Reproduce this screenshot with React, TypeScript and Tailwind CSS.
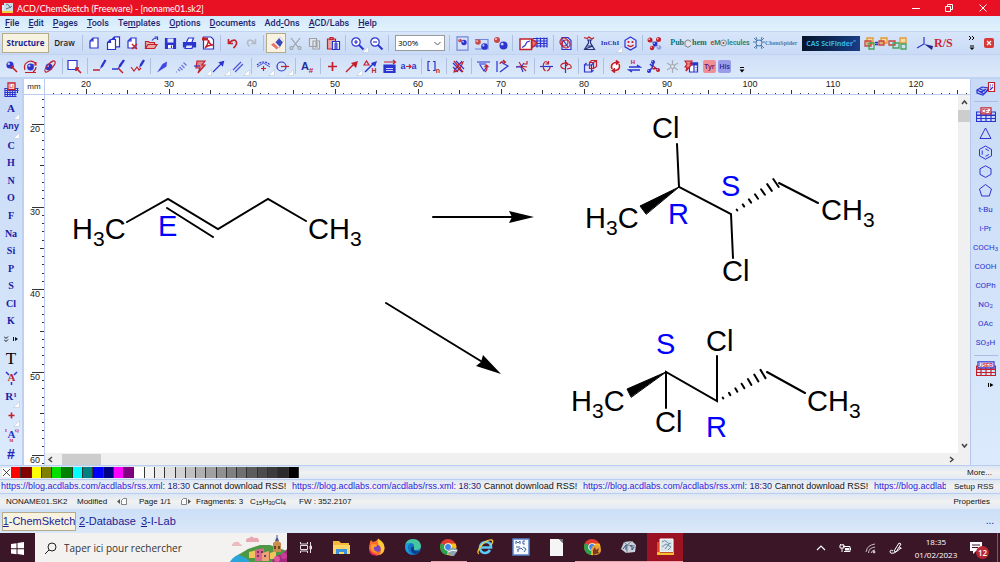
import type { ReactNode } from "react"

const B = "#2c34d0"
const R = "#c4202c"
const G = "#9aa0a8"

interface Tool {
    name: string,
    icon: ReactNode,
    more?: boolean,
    active?: boolean,
    width?: string,
}

function Icon({ children, w = 15, h = 15 }: { children: ReactNode, w?: number, h?: number }) {
    return <svg width={w} height={h} viewBox={`0 0 ${w} ${h}`} fill="none" stroke={B} strokeWidth={1.2} className="block shrink-0" aria-hidden="true">{children}</svg>
}

// a letter inside an icon
function Glyph({ x, y, size, color = B, serif, children }: { x: number, y: number, size: number, color?: string, serif?: boolean, children: string }) {
    return <text x={x} y={y} fontSize={size} fill={color} stroke="none" textAnchor="middle" className={serif ? "font-['Liberation_Serif',serif] font-bold" : "font-['Liberation_Sans',sans-serif] font-bold"}>{children}</text>
}

function Corner({ className }: { className: string }) {
    return <svg width="7" height="7" viewBox="0 0 7 7" className={`absolute ${className}`} aria-hidden="true"><path d="M6.500 .5v6h-6z" fill="#fff" stroke="#b9c6dd" strokeWidth=".6" /></svg>
}

function ToolButton({ tool }: { tool: Tool }) {
    return (
        <button type="button" aria-label={tool.name} className={`relative flex h-5 shrink-0 items-center justify-center ${tool.width || "w-[19px]"} ${tool.active ? "border border-[#b5ab8c] bg-[#f8f3e0]" : ""}`}>
            {tool.icon}
            {tool.more && <Corner className="right-[-2px] bottom-0" />}
        </button>
    )
}

function Divider({ width = "w-1.5" }: { width?: string }) {
    return <div className={`flex h-4 shrink-0 justify-center ${width}`}><div className="h-full w-px bg-[#aebfdf]" /></div>
}

function Group({ tools }: { tools: Tool[] }) {
    return <div className="flex shrink-0">{tools.map(t => <ToolButton key={t.name} tool={t} />)}</div>
}

const page = (x: number, y: number) => <path d={`M${x + 3} ${y}h5v10h-8v-7z M${x + 3} ${y}v3h-3`} fill="#fff" />
const ball = (x: number, y: number, r: number, c: string) => <g stroke="none"><circle cx={x} cy={y} r={r} fill={c} /><circle cx={x - r / 3} cy={y - r / 3} r={r / 3} fill="#fff" opacity=".75" /></g>

const fileTools: Tool[] = [
    { name: "New", icon: <Icon>{page(3, 2)}</Icon> },
    { name: "New page", icon: <Icon>{page(5.500, .8)}{page(1.500, 3.500)}</Icon> },
    { name: "Delete page", icon: <Icon>{page(3, 2)}<path d="M7 8l5 5M12 8l-5 5" stroke={R} strokeWidth="1.500" /></Icon> },
    { name: "Open", icon: <Icon><path d="M1.500 12.500v-7h3l1 1h5v2M1.500 12.500l2.500-4h9l-2.500 4z" stroke={R} fill="#e9a9a2" /><path d="M8 4.500q2-3 4.500-2M10.500 1h3v3" /></Icon> },
    { name: "Save", icon: <Icon><path d="M2.500 2.500h10v10h-10z" fill={B} /><path d="M4.500 2.500h6v4h-6z" fill="#dfe8fa" stroke="none" /><path d="M5 9h5v3.500h-5z" fill="#fff" stroke="none" /><path d="M8.500 9.500v2.500" /></Icon> },
    { name: "Print", icon: <Icon><path d="M4.500 6l2-4h5l-1.500 4" fill="#fff" /><path d="M1.500 6.500h12v4.500h-12z" fill={B} /><path d="M4 9h7l-1 3.500h-7z" fill="#dfe8fa" /></Icon> },
    { name: "Export to PDF", icon: <Icon><path d="M2.500 1h7.500l2.500 2.500v9.500h-10z" fill="#fff" /><path d="M1 1.500h6v3h-6z" fill={R} stroke="none" /><path d="M4 12q3.500-4 3.500-8 1 5 4.500 5-5 0-8 3z" stroke={R} strokeWidth="1.400" /></Icon> },
]

const undoTools: Tool[] = [
    { name: "Undo", icon: <Icon><path d="M3.500 3v4.500h4.500M4 7q4-4 6.500-2.500 3 3-2 7.500" stroke={R} strokeWidth="1.700" /></Icon> },
    { name: "Redo", icon: <Icon><path d="M11.500 3v4.500h-4.500M11 7q-4-4-6.500-2.500-2.500 2.500 1 6" stroke="#b4b9c2" strokeWidth="1.500" /></Icon> },
]

const editTools: Tool[] = [
    { name: "Erase", active: true, width: "w-[20px]", icon: <Icon><path d="M5 8l6-7 3.500 4-4 7z" fill="#3a48b8" stroke="none" /><path d="M2 9l4-3.500 4.500 5.500-3 2.500z" fill="#e8776c" stroke="none" /><path d="M5 6l5.500 5.500M10.500 1.500l3.500 4M2 10l4 3" stroke="#fff" /></Icon> },
    { name: "Cut", icon: <Icon><path d="M3 2l7 9M12 2l-7 9" stroke={G} /><circle cx="3.500" cy="12" r="1.500" stroke={G} /><circle cx="11.500" cy="12" r="1.500" stroke={G} /></Icon> },
    { name: "Copy", icon: <Icon><path d="M2.500 2.500h7v8h-7z M6 5h6.500v8h-6.500zM8 7h3M8 9h3M8 11h3" stroke={G} fill="#e4e7ec" /></Icon> },
    { name: "Paste", icon: <Icon><path d="M1.500 3h8v10h-8z" stroke={R} fill="#e8a7a2" /><path d="M4 1.500h3v2h-3z" stroke={R} /><path d="M6.500 5.500h7v8h-7z" fill="#fff" /><path d="M8 8h4M8 10h4M8 12h4M10 6v7" /></Icon> },
]

const zoomTools: Tool[] = [
    { name: "Zoom in", more: true, icon: <Icon><circle cx="6" cy="6" r="4.200" fill="#fff" /><path d="M9 9l4.500 4.500" strokeWidth="2" /><path d="M4 6h4M6 4v4" /></Icon> },
    { name: "Zoom out", icon: <Icon><circle cx="6" cy="6" r="4.200" fill="#fff" /><path d="M9 9l4.500 4.500" strokeWidth="2" /><path d="M4 6h4" /></Icon> },
]

const viewTools: Tool[] = [
    { name: "Full page", icon: <Icon><path d="M2 .8h11v13.400h-11z" fill="#d6e2fa" stroke="#7286dc" />{ball(5, 4.500, 1.800, "#c23b3b")}{ball(9, 6.500, 2.700, B)}</Icon> },
    { name: "Page width", icon: <Icon><path d="M1 3.500h13v9.500h-13" stroke="#7286dc" />{ball(4, 6, 2.800, "#c8484b")}{ball(10.500, 10.500, 3.300, B)}</Icon> },
    { name: "Show structure", icon: <Icon>{ball(4, 4, 3, "#c8484b")}{ball(10.500, 9.500, 4, B)}</Icon> },
]

const templateTools: Tool[] = [
    { name: "Template window", width: "w-[36px]", icon: <Icon w={29}><path d="M14 2.500h14M14 5h14M14 7.500h14M14 10h14M18 1.500v10M21.500 1.500v10M25 1.500v10M28 1.500v10" /><path d="M1 3h11.500v10.500h-11.500z" fill="#fff" stroke={R} strokeWidth="1.500" /><path d="M3 11.500l3-2 2-3.500 3-1" /><path d="M13 3l5 4-5 5z" fill="#d77" stroke={R} /></Icon> },
]

const searchTools: Tool[] = [
    { name: "Search structure", icon: <Icon><path d="M4 1.500h6l3 3v9h-9z" fill="#d8e3fa" /><circle cx="6" cy="6" r="4" stroke={R} /><circle cx="8" cy="8" r="4" stroke={R} /><path d="M5 4l5 7" /></Icon> },
]

const nameTools: Tool[] = [
    { name: "Generate name", icon: <Icon><path d="M2 1.500l3 1 2-1.500 3 2 2-1.500" stroke={R} /><path d="M5 4h5M6.500 4v3l-4 6.500h10l-4-6.500v-3M5 10h5M3 13l8-3" stroke="#27317b" /></Icon> },
    { name: "InChI", more: true, width: "w-[22px]", icon: <span className="font-['Liberation_Serif',serif] text-[7px] font-bold text-[#2c34b8]">InChI</span> },
    { name: "SMILES", icon: <Icon><path d="M7.500 1l5.500 3.300v6.500l-5.500 3.200-5.500-3.200v-6.500z" fill="#dfe6fb" /><circle cx="5.500" cy="6" r=".5" fill={R} stroke={R} /><circle cx="9.500" cy="6" r=".5" fill={R} stroke={R} /><path d="M4.500 9q3 3 6 0" stroke={R} /></Icon> },
]

const modelTools: Tool[] = [
    { name: "3D viewer", icon: <Icon><path d="M3 4l5 4M8 8l4-4M8 8l-1 4M8 8l4 4" stroke="#9fa8d8" strokeWidth="2" />{ball(3, 4, 2.500, R)}{ball(11.500, 3.500, 2.500, R)}{ball(8, 8, 2.400, B)}{ball(5, 12, 2.200, R)}{ball(12, 11.500, 2.300, "#8f9ce4")}</Icon> },
]

// second toolbar, one array per separated group
const drawGroups: Tool[][] = [
    [
        { name: "Select and move", icon: <Icon>{ball(6, 6, 3.600, B)}<path d="M7 7l6 6M7.500 10v-2.500h2.500" stroke={R} strokeWidth="1.600" /></Icon> },
        { name: "Select and rotate", icon: <Icon>{ball(7.500, 8, 3.400, B)}<path d="M2 11q-2-6 3.500-8.500 5-1.500 7.500 3M13 3v3h-3M2 13.500h11M13 8q0 3-3 5" stroke={R} /></Icon> },
        { name: "3D rotation", icon: <Icon>{ball(7, 8, 3.500, B)}<ellipse cx="8" cy="7.500" rx="2.500" ry="7" transform="rotate(42 8 7.500)" stroke={R} /></Icon> },
    ],
    [{ name: "Lasso", icon: <Icon><path d="M1 1.500h9v9h-9z" fill="#fff" /><path d="M9 9l5 5M9 12v-3h3" stroke={R} strokeWidth="1.700" /></Icon> }],
    [
        { name: "Draw normal", icon: <Icon><path d="M1 11h7" stroke={R} strokeWidth="1.500" /><path d="M8 10l1-3.500 3.500-6 2 1-3.500 6z" fill={B} stroke="none" /></Icon> },
        { name: "Draw continuous", icon: <Icon><path d="M7 9l5 5" stroke={R} strokeWidth="1.500" /><path d="M1 10h6" strokeWidth="1.500" /><path d="M7 10l1-4 4-5.500 2 1-4 6z" fill={B} stroke="none" /></Icon> },
        { name: "Draw chains", icon: <Icon><path d="M1 8l3 4 3-4 2 3 2-2" stroke={R} /><path d="M9 9l1-4 3-4.500 2 1-3 5z" fill={B} stroke="none" /></Icon> },
    ],
    [
        { name: "Up stereo bond", icon: <Icon><path d="M2 13.500l5.500-8.500 4.500-2.500-.5 5z" fill="#3f4be0" stroke="none" /></Icon> },
        { name: "Down stereo bond", icon: <Icon><path d="M2 13l1 0M4 10l2 2M5.500 8l3 3M7.500 6l3 3M9.500 3.500l3 3" stroke="#6d74dc" /></Icon> },
        { name: "Undefined bond", more: true, icon: <Icon><path d="M4 2h8l-3 4h3l-7 8 2-5h-4z" fill="#de8587" stroke={R} /><path d="M1 7h6" /></Icon> },
        { name: "Coordinating bond", more: true, icon: <Icon><path d="M1 13l9-9M7.500 3.500l4-1-1 4z" fill={B} /></Icon> },
        { name: "Multiple bond", more: true, icon: <Icon><path d="M2 11l8-8M4 13l8-8" stroke="#4a55dc" /></Icon> },
    ],
    [
        { name: "Delocalized curve", more: true, icon: <Icon><path d="M1 6q6.500-6 13 0" strokeDasharray="2 1" /><path d="M1 8l6.500-4 6.500 4" strokeWidth=".8" /><path d="M5 9.500h5M7.500 7v5" stroke={R} /></Icon> },
        { name: "Markush bond", more: true, icon: <Icon><circle cx="6.500" cy="7.500" r="4.500" /><path d="M6 7.500h8" stroke={R} /></Icon> },
    ],
    [{ name: "Auto renumbering", icon: <Icon><Glyph x={5} y={11} size={11} color="#22309c">A</Glyph><Glyph x={11} y={14} size={8} color={R}>#</Glyph></Icon> }],
    [
        { name: "Reaction plus", icon: <Icon><path d="M3 7.500h9M7.500 3v9" stroke={R} strokeWidth="1.700" /></Icon> },
        { name: "Reaction arrow", more: true, icon: <Icon><path d="M2 13l8-8" stroke={R} strokeWidth="1.500" /><path d="M7 4l7-2-2 7z" fill={R} stroke="none" /></Icon> },
        { name: "Reaction conditions", icon: <Icon><path d="M2 13l9-9" strokeWidth="1.500" /><path d="M8 4l6-2-2 6z" fill={B} stroke="none" /><path d="M1 6l2.500-4 2.500 4z" stroke={R} /><Glyph x={11} y={14} size={7} color={R}>H</Glyph></Icon> },
        { name: "Arrow labels", icon: <Icon><path d="M2 3h11M11 1l2.500 2-2.500 2" stroke={R} /><path d="M2 6h11v7.500h-11z" fill={B} /><path d="M4 9.500h7M4 11.500h7" stroke="#fff" strokeWidth=".8" /></Icon> },
        { name: "Map atoms", icon: <Icon w={17}><Glyph x={3} y={10} size={9}>a</Glyph><Glyph x={14} y={10} size={9}>a</Glyph><path d="M6 7.500h5M9 5.500l2 2-2 2" stroke={R} /></Icon> },
    ],
    [{ name: "Polymer brackets", icon: <Icon><path d="M4 2.500h-2v9h2M7 2.500h2v9h-2" /><Glyph x={12} y={14} size={7} color={R}>n</Glyph></Icon> }],
    [{ name: "Clean structure", icon: <Icon><path d="M2 4l9 9M5 2l8 8M2 8l5 5M11 2l-8 10" /><path d="M3 2l9 11M12 3q-6 2-9 10 6-1 9-10z" stroke={R} /></Icon> }],
    [
        { name: "Set bond horizontally", icon: <Icon><path d="M1 3h13M3 5h7M4 6l4 6 3-5" /><path d="M9 13q3-3 1.500-6M8.500 8l2-2 2 2" stroke={R} /></Icon> },
        { name: "Set bond vertically", icon: <Icon><path d="M2 2v11M5 13l8-6-7-4" /><path d="M5 5q0-3 5-2M8 1l2.500 2L8 5" stroke={R} /></Icon> },
        { name: "Flip on bond", icon: <Icon><path d="M2 8l5-1 6 1M5 3l3 5 4 4" stroke={R} /><path d="M10 4l-3 4 2 5M2 8h6" /><path d="M10 5h3v-3" stroke={R} /></Icon> },
    ],
    [
        { name: "Flip top to bottom", icon: <Icon><path d="M1 7.500h13" /><path d="M9.500 5q-3-5-5 0-1 5 2 7M9.500 2v3h-3M8 12q3-1 3-4" stroke={R} /></Icon> },
        { name: "Flip left to right", icon: <Icon><path d="M7.500 1v13" /><path d="M10 5q-5-2-7 1-1 3 4 4M10 5q4 1 3 4l-4 1M8 3l2 2-2 2" stroke={R} /></Icon> },
    ],
    [{ name: "3D optimization", icon: <Icon><path d="M1.500 6h7v7h-7zM1.500 6l2-2M8.500 6l2-2M8.500 13l2-2" fill="#dbe4fb" /><path d="M6.500 3.500h4v6h-4zM6.500 3.500l2-2h5v6l-3 2M10.500 3.500l3-2" stroke={R} /></Icon> }],
    [
        { name: "Tautomers", icon: <Icon><circle cx="7.500" cy="7.500" r="6" stroke="#d6dbe6" fill="#fff" /><path d="M4 10q-2-5 3-6.500h3M8 1.500l2.500 2-2.500 2M11 5q2 5-3 6.500h-3M7 9.500l-2.500 2 2.500 2" stroke={R} strokeWidth="1.700" /></Icon> },
        { name: "Hydrogen shift", icon: <Icon><Glyph x={6} y={5} size={6} color={R}>H</Glyph><path d="M2 8h11l-3-2M13 11h-11l3 2" strokeWidth="1.500" /></Icon> },
        { name: "Check structure", icon: <Icon><path d="M7 2v6l-5 5M7 8l6 3M4 5l3 3" strokeWidth="1.700" />{ball(7, 3, 2, B)}{ball(3, 12, 2, B)}{ball(12, 11, 2, R)}{ball(8, 9, 1.700, R)}</Icon> },
        { name: "Calculated properties", icon: <Icon><path d="M7.500 1v13M2 4l11 7M2 11l11-7" stroke="#a8adb5" /><circle cx="7.500" cy="7.500" r="2" stroke="#a8adb5" fill="#dfe4ec" /></Icon> },
        { name: "Periodic data", icon: <Icon><path d="M5.500 4h8v9h-8z" fill="#fff" /><path d="M5.500 4h8v2h-8z" fill={B} /><path d="M10 6v7M11.500 8.500h1M11.500 11h1" /><path d="M1 2h7l-2 3h2l-6 7 1-4h-2l2-3z" fill="#e88" stroke={R} /></Icon> },
    ],
]

function TopToolbar() {
    return (
        <div className="flex h-6 items-center border-y border-[#c2d3f1] bg-linear-to-b from-[#d8e6fa] to-[#c9dbf6] pl-0.5">
            <button type="button" className="h-5 w-[47px] shrink-0 border border-[#b5ab8c] bg-[#f8f3e0] font-['Open_Sans',sans-serif] text-[8px] font-bold text-[#1d1d96]">Structure</button>
            <button type="button" className="h-5 w-[31px] shrink-0 font-['Open_Sans',sans-serif] text-[8px] font-semibold text-[#222]">Draw</button>
            <Divider width="w-[5px]" />
            <Group tools={fileTools} />
            <Divider width="w-[5px]" />
            <Group tools={undoTools} />
            <Divider width="w-[5px]" />
            <Group tools={editTools} />
            <Divider width="w-[5px]" />
            <Group tools={zoomTools} />
            <Divider width="w-[5px]" />
            <div className="relative ml-1 shrink-0">
                <select aria-label="Zoom level" defaultValue="300%" className="block h-4 w-[50px] appearance-none border border-[#9a9a9a] bg-white py-0 pl-0.5 font-['Open_Sans',sans-serif] text-[8px] leading-[14px] text-black">
                    <option>300%</option>
                    <option>200%</option>
                    <option>100%</option>
                </select>
                <svg width="7" height="5" viewBox="0 0 7 5" className="pointer-events-none absolute top-1.5 right-1" aria-hidden="true"><path d="M.5 1l3 3 3-3" fill="none" stroke="#555" /></svg>
            </div>
            <Divider width="w-2" />
            <Group tools={viewTools} />
            <Divider width="w-[5px]" />
            <Group tools={templateTools} />
            <Divider width="w-[5px]" />
            <Group tools={searchTools} />
            <Divider width="w-[5px]" />
            <Group tools={nameTools} />
            <Divider width="w-[5px]" />
            <Group tools={modelTools} />
            <button type="button" className="ml-1.5 flex w-[37px] shrink-0 items-center justify-center font-['Liberation_Serif',serif] text-[8px] leading-none font-bold text-[#0d7371]">
                Pub<svg width="8" height="9" viewBox="0 0 8 9" className="shrink-0" aria-label="C"><path d="M7 6.500l-3 1.900-3-1.800v-4l3-1.800 3 1.900" fill="#e3e6ea" stroke="#777e88" /></svg>hem
            </button>
            <button type="button" className="ml-1 flex w-[38px] shrink-0 items-center justify-center font-['Roboto',sans-serif] text-[7px] leading-none font-semibold text-[#1e8270]">
                <span className="text-[#c0303c]">e</span>M<svg width="7" height="8" viewBox="0 0 7 8" className="shrink-0" aria-label="o"><circle cx="3.500" cy="4" r="3" fill="#d9e8e8" stroke="#868d95" /><circle cx="3.500" cy="4" r="1" fill="#c0303c" /></svg>lecules
            </button>
            <button type="button" className="ml-1 flex w-[45px] shrink-0 items-center font-['Liberation_Serif',serif] text-[6px] leading-none font-bold text-[#4f7ba8]">
                <svg width="12" height="12" viewBox="0 0 12 12" className="shrink-0" fill="none" stroke="#4f7ba8" aria-hidden="true"><circle cx="6" cy="6" r="3" /><path d="M1 1l3 3M11 1l-3 3M1 11l3-3M11 11l-3-3M0 5h3M12 5h-3M3 0l1 3M9 0l-1 3M3 12l1-3M9 12l-1-3" /></svg>
                ChemSpider
            </button>
            <button type="button" className="ml-1 flex h-[15px] w-[58px] shrink-0 items-center justify-center bg-linear-to-r from-[#06142c] to-[#1a3d88] font-['Open_Sans',sans-serif] text-[7px] leading-none font-bold whitespace-nowrap text-[#35b4e4]">CAS SciFinder<sup className="text-[4px]">n</sup></button>
            <button type="button" aria-label="Retrosynthesis" className="ml-1 shrink-0">
                <svg width="44" height="13" viewBox="0 0 44 13" fill="none" strokeWidth="1.300" aria-hidden="true">
                    <path d="M3 1h6v6h-6zM17 1h6v5h-6zM36 1h6v5h-6z" stroke="#e39a2e" fill="#f6dba8" />
                    <path d="M1 4h6v5h-6zM15 4h5v4h-5zM25 4h6v4h-6z" stroke="#c9423c" />
                    <path d="M5 6h5v6h-5zM29 6h6v5h-6zM37 7h5v5h-5z" stroke="#47a35b" />
                    <path d="M11 5.500h3M11 7.500h3" stroke={B} />
                </svg>
            </button>
            <button type="button" className="ml-2 flex shrink-0 items-center font-['Liberation_Serif',serif] text-[12px] leading-none font-bold text-[#cb1f37]">
                <svg width="18" height="14" viewBox="0 0 18 14" aria-hidden="true"><path d="M8 1v7L1 12" fill="none" stroke={B} strokeWidth="1.200" /><path d="M8 8l9 2-1 4z" fill="#24278f" /></svg>
                R/S
            </button>
            <button type="button" aria-label="Toolbar options" className="ml-auto shrink-0">
                <svg width="8" height="16" viewBox="0 0 8 16" fill="none" stroke="#000" aria-hidden="true"><path d="M1 1l2 2-2 2M4 1l2 2-2 2M2 11h4" /><path d="M1.500 12.500h5l-2.500 2.500z" fill="#000" stroke="none" /></svg>
            </button>
            <button type="button" aria-label="Close document" className="mr-1.5 ml-2 flex size-2.5 shrink-0 items-center justify-center rounded-xs bg-[#d73838]">
                <svg width="6" height="6" viewBox="0 0 6 6" aria-hidden="true"><path d="M1 1l4 4M5 1l-4 4" stroke="#fff" strokeWidth="1.200" /></svg>
            </button>
        </div>
    )
}

function DrawToolbar() {
    return (
        <div className="flex h-6 items-center border-b-2 border-[#bfd3f3] bg-linear-to-b from-[#cfdff7] to-[#dbe9fa] pl-0.5">
            {drawGroups.map((g, i) => (
                <div key={i} className="flex shrink-0 items-center">
                    {i > 0 && <Divider />}
                    <Group tools={g} />
                </div>
            ))}
            <button type="button" className="ml-0.5 flex shrink-0 items-center font-['Open_Sans',sans-serif] text-[7px] leading-none font-semibold text-[#4a1a7a]">
                <span className="flex h-[13px] w-[13px] items-center justify-center rounded-xs bg-[#f28e96]">Tyr</span>
                <span className="ml-0.5 flex h-[13px] w-[13px] items-center justify-center rounded-xs bg-[#9a9ce8] text-[#1d1d9c]">His</span>
            </button>
            <button type="button" aria-label="More tools" className="mt-2 ml-2 shrink-0">
                <svg width="6" height="6" viewBox="0 0 6 6" aria-hidden="true"><path d="M1 0h4v1h-4zM.5 2.500h5l-2.500 3z" /></svg>
            </button>
        </div>
    )
}

const elements = ["C", "H", "N", "O", "F", "Na", "Si", "P", "S", "Cl", "K"]
const sideSerif = "font-['Liberation_Serif',serif] font-bold text-[#1c1ca8]"

function SideItem({ name, more, children }: { name: string, more?: boolean, children: ReactNode }) {
    return (
        <button type="button" aria-label={name} className="relative flex h-[19px] w-full shrink-0 items-center justify-center leading-none">
            {children}
            {more && <Corner className="right-0.5 bottom-[-2px]" />}
        </button>
    )
}

function AtomsBar() {
    return (
        <aside className="flex w-6 shrink-0 flex-col border-r-2 border-[#bfd0f0] bg-linear-to-b from-[#c8daf6] to-[#dbeafc] pt-px">
            <SideItem name="Periodic table"><Icon><path d="M.5 6.500h14M.5 8.500h14M.5 10.500h12M.5 12.500h12M.5 14.500h12M1 6v8.500M3.500 6v8.500M6 6v8.500M8.500 6v8.500M11 6v8.500M13.500 6v5" strokeWidth="1" /><path d="M4 1h7v6.500h-7z" fill="#fff" stroke={R} strokeWidth="1.300" /><Glyph x={7.500} y={6} size={5} color={R}>Li</Glyph></Icon></SideItem>
            <SideItem name="Atom A" more><span className="font-['Liberation_Serif',serif] text-[11px] font-bold text-[#1c1ca8]">A</span></SideItem>
            <SideItem name="Any atom" more><span className="font-['Liberation_Mono',monospace] text-[9px] font-bold text-[#1c1ca8]">Any</span></SideItem>
            <div className="flex h-[193px] shrink-0 flex-col">
                {elements.map(e => <button key={e} type="button" className={`flex-1 text-[10px] leading-none ${sideSerif}`}>{e}</button>)}
            </div>
            <SideItem name="More elements"><svg width="14" height="7" viewBox="0 0 14 7" fill="none" stroke="#111" aria-hidden="true"><path d="M0 .5l2 2 2-2M0 3.500l2 2 2-2M9.500 1v4" /><path d="M11 1l3 2-3 2z" fill="#111" stroke="none" /></svg></SideItem>
            <SideItem name="Text"><span className="font-['Liberation_Serif',serif] text-[17px] text-black">T</span></SideItem>
            <SideItem name="Atom properties"><Icon><path d="M2 2l3 3M13 2l-3 3M7.500 12v3" strokeWidth="1.500" /><Glyph x={7.500} y={11} size={11} color={R} serif>A</Glyph></Icon></SideItem>
            <SideItem name="Radical label" more><span className={`text-[11px] ${sideSerif}`}>R<sup className="text-[7px]">1</sup></span></SideItem>
            <SideItem name="Charge" more><Icon><path d="M4.500 7.500h6M7.500 4.500v6" stroke={R} strokeWidth="1.600" /></Icon></SideItem>
            <SideItem name="Query atom"><Icon><Glyph x={7.500} y={11} size={11} serif>A</Glyph><Glyph x={2} y={5} size={5} color={R} serif>I</Glyph><Glyph x={13} y={5} size={5} color={R} serif>Q</Glyph><Glyph x={7.500} y={15} size={4} color={R} serif>M</Glyph></Icon></SideItem>
            <SideItem name="Numbering"><span className="font-['Liberation_Sans',sans-serif] text-[14px] font-bold text-[#2424b8]">#</span></SideItem>
        </aside>
    )
}

const rings = [
    { name: "Cyclopropane", d: "M7.500 2l5.500 10.500h-11z" },
    { name: "Benzene", d: "M7.500 1l6 3.400v6.400l-6 3.400-6-3.400v-6.400zM7.500 3.800l3.300 1.900M10.800 9.500l-3.300 1.900M4.200 5.500v4.200" },
    { name: "Cyclohexane", d: "M7.500 1.800l5.500 3v5.600l-5.500 3-5.500-3v-5.600z" },
    { name: "Cyclopentane", d: "M7.500 1.500l6 4.500-2.200 7h-7.600l-2.200-7z" },
]

const radicals: ReactNode[] = [
    "t-Bu", "i-Pr", <>COCH<sub className="text-[6px]">3</sub></>, "COOH", "COPh", <>NO<sub className="text-[6px]">2</sub></>, "OAc", <>SO<sub className="text-[6px]">3</sub>H</>,
]

function RadicalsBar() {
    return (
        <aside className="flex w-[30px] shrink-0 flex-col items-center border-l border-[#b5c6ec] bg-linear-to-b from-[#c8daf6] to-[#dbeafc]">
            <SideItem name="Template table"><Icon w={20}><path d="M1 9l5-3 7 1-5 6zM1 9v3l6 2 6-6M4 8l5 2M5 11l5-3M3 10l4 1" fill="#b9c5f5" /><path d="M12.500 1.500h6v9h-6z" fill="#fff" stroke={R} /><path d="M14 9l3-3M14 4h1M16 4h1M14 6h1" /></Icon></SideItem>
            <div className="my-[3px] h-px w-6 shrink-0 bg-[#a9bce6]" />
            <SideItem name="Table of radicals"><Icon w={20}><path d="M.5 5h19v3h-19zM.5 8.500h19v3h-19zM.5 11.500h19v3h-19zM5 5v9.500M10 5v9.500M15 5v9.500" /><path d="M5 .8h10v6h-10z" fill="#fff" stroke={R} /><Glyph x={10} y={6} size={5} color={R}>CF₃</Glyph></Icon></SideItem>
            {rings.map(r => <SideItem key={r.name} name={r.name}><Icon><path d={r.d} strokeWidth="1" /></Icon></SideItem>)}
            {radicals.map((r, i) => (
                <button key={i} type="button" className="h-[19px] w-full shrink-0 font-['Roboto',sans-serif] text-[8px] leading-none whitespace-nowrap text-[#2c34d0]">{r}</button>
            ))}
            <div className="my-[3px] h-px w-6 shrink-0 bg-[#a9bce6]" />
            <SideItem name="User templates"><Icon w={20}><path d="M.5 5h19v3h-19zM.5 8.500h19v3h-19zM.5 11.500h19v3h-19zM5 5v9.500M10 5v9.500M15 5v9.500" stroke={R} /><path d="M2 .8h16v6h-16z" fill="#fff" /><Glyph x={10} y={6} size={5} color={R}>USER</Glyph></Icon></SideItem>
            <button type="button" aria-label="More templates" className="mt-1 ml-2.5 shrink-0"><svg width="6" height="6" viewBox="0 0 6 6" aria-hidden="true"><path d="M0 1h1v4h-1zM2 1l3.500 2-3.500 2z" /></svg></button>
        </aside>
    )
}

const STEP = 8.300

function TopRuler() {
    const ticks = Array.from({ length: 111 }, (_, i) => i)
    return (
        <svg className="block h-4 w-full font-['Liberation_Sans',sans-serif] text-[9px]" aria-label="Horizontal ruler in millimetres">
            {ticks.map(i => {
                const x = Math.round(7.500 + i * STEP)
                const mm = i + 16
                const len = mm % 10 === 0 ? 5 : mm % 5 === 0 ? 4 : 1
                return <g key={i}>
                    <path d={`M${x + .5} ${15 - len}v${len}`} stroke="#333" />
                    {mm % 10 === 0 && <text x={x} y="8" textAnchor="middle" fill="#222">{mm}</text>}
                </g>
            })}
        </svg>
    )
}

function LeftRuler() {
    const ticks = Array.from({ length: 90 }, (_, i) => i)
    return (
        <svg className="block w-full flex-1 font-['Liberation_Sans',sans-serif] text-[9px]" height="0" aria-label="Vertical ruler in millimetres">
            {ticks.map(i => {
                const y = Math.round(4 + i * 8.270)
                const mm = i + 17
                const len = mm % 10 === 0 ? 12 : mm % 5 === 0 ? 4 : 2
                return <g key={i}>
                    <path d={`M${20 - len} ${y + .5}h${len}`} stroke="#333" />
                    {mm % 10 === 0 && <text x="16" y={y + 8} textAnchor="end" fill="#222">{mm}</text>}
                </g>
            })}
        </svg>
    )
}

function Methyl({ x, y, flip }: { x: number, y: number, flip?: boolean }) {
    return flip
        ? <text x={x} y={y}>H<tspan dy="7" fontSize="21">3</tspan><tspan dy="-7">C</tspan></text>
        : <text x={x} y={y}>CH<tspan dy="7" fontSize="21">3</tspan></text>
}

// dashed wedge: strokes grow wider from the stereo centre outwards
function Hash({ x, y, dx, dy }: { x: number, y: number, dx: number, dy: number }) {
    const len = Math.hypot(dx, dy)
    return <>
        {[0, 1, 2, 3, 4, 5, 6].map(i => {
            const t = i / 6
            const half = .6 + i * .7
            const nx = -dy / len * half
            const ny = dx / len * half
            return <line key={i} x1={x + dx * t - nx} y1={y + dy * t - ny} x2={x + dx * t + nx} y2={y + dy * t + ny} />
        })}
    </>
}

function Canvas() {
    return (
        <svg className="block w-full flex-1 bg-white font-['Liberation_Sans',sans-serif]" height="0" aria-label="Addition of chlorine to pent-2-ene">
            <g transform="translate(-45 -95)" stroke="#000" strokeWidth="2" strokeLinecap="round" fill="none">
                <path d="M127 222L168 199L218 229L268 199L306 221M167 208L213 237" />
                <path d="M433 217H512M386 303L484 363" />
                <path d="M534 217L509 211L512 217L509 223Z" fill="#000" stroke="none" />
                <path d="M501 374L476 366L481 362L483 355Z" fill="#000" stroke="none" />

                <path d="M677 144L679 187L731 214L733 258M779 183L818 203" />
                <path d="M679 187L640 206L646 214Z" fill="#000" strokeWidth="1" />
                <Hash x={737} y={210} dx={39} dy={-27} />

                <path d="M666 408V372L717 401V356M767 372L805 393" />
                <path d="M666 372L627 389L631 397Z" fill="#000" strokeWidth="1" />
                <Hash x={723} y={398} dx={40} dy={-24} />
            </g>
            <g transform="translate(-45 -95)" fontSize="29" fill="#000">
                <Methyl x={72} y={239} flip />
                <Methyl x={308} y={239} />
                <Methyl x={585} y={228} flip />
                <Methyl x={821} y={220} />
                <Methyl x={571} y={411} flip />
                <Methyl x={807} y={411} />
                <text x="652" y="138">Cl</text>
                <text x="722" y="281">Cl</text>
                <text x="706" y="351">Cl</text>
                <text x="655" y="432">Cl</text>
            </g>
            <g transform="translate(-45 -95)" fontSize="29" fill="#00f">
                <text x="158" y="236">E</text>
                <text x="668" y="224">R</text>
                <text x="721" y="196">S</text>
                <text x="656" y="354">S</text>
                <text x="706" y="437">R</text>
            </g>
        </svg>
    )
}

function Chevron({ d }: { d: string }) {
    return <svg width="7" height="7" viewBox="0 0 7 7" aria-hidden="true"><path d={d} fill="none" stroke="#444" strokeWidth="1.500" /></svg>
}

function Workspace() {
    return (
        <main className="flex min-h-[386px] flex-1">
            <AtomsBar />
            <div className="flex w-[21px] shrink-0 flex-col border-r border-[#b9cbef] bg-white">
                <div className="flex h-4 items-center justify-center border-b border-[#b9cbef] font-['Liberation_Sans',sans-serif] text-[8px] text-[#222]">mm</div>
                <LeftRuler />
            </div>
            <div className="flex min-w-0 flex-1 flex-col">
                <div className="h-4 shrink-0 border-b border-[#b9cbef] bg-white"><TopRuler /></div>
                <div className="flex flex-1">
                    <div className="flex min-w-0 flex-1 flex-col"><Canvas /></div>
                    <div className="flex w-3 shrink-0 flex-col items-center bg-[#f0f0f0]">
                        <button type="button" aria-label="Scroll up" className="flex h-[15px] items-center"><Chevron d="M1 5l2.500-3 2.500 3" /></button>
                        <div className="h-3 w-full bg-[#cdcdcd]" />
                        <button type="button" aria-label="Scroll down" className="mt-auto flex h-[15px] items-center"><Chevron d="M1 2l2.500 3 2.500-3" /></button>
                    </div>
                </div>
                <div className="flex h-3 shrink-0 items-center bg-[#f0f0f0] pr-[15px]">
                    <button type="button" aria-label="Scroll left" className="flex w-[17px] pl-0.5"><Chevron d="M5 1l-3 2.500 3 2.500" /></button>
                    <div className="h-[11px] w-[39px] bg-[#cdcdcd]" />
                    <button type="button" aria-label="Scroll right" className="ml-auto"><Chevron d="M2 1l3 2.500-3 2.500" /></button>
                </div>
            </div>
            <RadicalsBar />
        </main>
    )
}

const swatches = [
    "bg-[#ff0000]", "bg-[#800000]", "bg-[#ffff00]", "bg-[#808000]", "bg-[#00e000]", "bg-[#008000]", "bg-[#00ffff]",
    "bg-[#008080]", "bg-[#0000ff]", "bg-[#000080]", "bg-[#ff00ff]", "bg-[#800080]", "bg-[#ffffff]", "bg-[#f4f4f4]",
    "bg-[#ebebeb]", "bg-[#e0e0e0]", "bg-[#d2d2d2]", "bg-[#c0c0c0]", "bg-[#b0b0b0]", "bg-[#a0a0a0]", "bg-[#909090]",
    "bg-[#808080]", "bg-[#707070]", "bg-[#5c5c5c]", "bg-[#4c4c4c]", "bg-[#3c3c3c]", "bg-[#2c2c2c]", "bg-[#000000]",
]

const barStyle = "flex shrink-0 items-center border-t border-[#b9cdf0] bg-linear-to-b from-[#dce6f4] via-[#f1f1f0] to-[#e2eaf5]"

function Palette() {
    return (
        <div className={`h-3.5 ${barStyle}`}>
            <button type="button" aria-label="No colour" className="ml-0.5 w-[9px]"><svg width="9" height="9" viewBox="0 0 9 9" aria-hidden="true"><path d="M0 0h9v9h-9z" fill="#fff" /><path d="M1 1l7 7M8 1l-7 7" stroke="#222" strokeWidth=".8" /></svg></button>
            <div className="flex h-[11px] w-[288px]">
                {swatches.map(s => <button key={s} type="button" aria-label="Colour" className={`flex-1 border-r border-[#333] ${s}`} />)}
            </div>
            <button type="button" className="mr-2 ml-auto font-['Liberation_Sans',sans-serif] text-[8px] leading-none text-[#111]">More...</button>
        </div>
    )
}

function RssBar() {
    return (
        <div className={`h-3.5 ${barStyle} font-['Liberation_Sans',sans-serif] leading-none whitespace-nowrap`}>
            <div className="flex min-w-0 flex-1 overflow-hidden text-[9px]">
                {[0, 1, 2, 3].map(i => (
                    <div key={i} className="w-[291px] shrink-0 pl-px">
                        <a href="https://blog.acdlabs.com/acdlabs/rss.xml" className="text-[#2a22e0]">https://blog.acdlabs.com/acdlabs/rss.xml:</a> <span className="text-[#1c1a80]">18:30</span> <span className="text-[#111]">Cannot download RSS!</span>
                    </div>
                ))}
            </div>
            <button type="button" className="w-[54px] shrink-0 pl-2 text-left text-[8px] text-[#111]">Setup RSS</button>
        </div>
    )
}

function StatusBar() {
    return (
        <div className={`h-4 ${barStyle} font-['Liberation_Sans',sans-serif] text-[8px] leading-none whitespace-nowrap text-[#111]`}>
            <span className="w-[71px] pl-1.5">NONAME01.SK2</span>
            <span className="w-[46px] pl-1.5">Modified</span>
            <button type="button" aria-label="Previous page"><svg width="11" height="7" viewBox="0 0 11 7" aria-hidden="true"><path d="M3 1v5l-3-2.500z" fill="#555" /><path d="M6.500 .5h3v6h-5v-4z" fill="#fff" stroke="#666" strokeWidth=".8" /></svg></button>
            <span className="w-[52px] pl-[11px]">Page 1/1</span>
            <button type="button" aria-label="Next page"><svg width="11" height="7" viewBox="0 0 11 7" aria-hidden="true"><path d="M8 1v5l3-2.500z" fill="#555" /><path d="M3.500 .5h3v6h-5v-4z" fill="#fff" stroke="#666" strokeWidth=".8" /></svg></button>
            <span className="w-[59px] pl-[5px]">Fragments: 3</span>
            <span className="w-[49px]">C<sub className="text-[6px]">15</sub>H<sub className="text-[6px]">30</sub>Cl<sub className="text-[6px]">4</sub></span>
            <span>FW : 352.2107</span>
            <button type="button" className="mr-2.5 ml-auto">Properties</button>
        </div>
    )
}

function ModuleTabs() {
    return (
        <nav className="flex h-6 shrink-0 items-center bg-linear-to-b from-[#cbdff7] to-[#dbe8f9] pl-0.5 font-['Liberation_Sans',sans-serif] text-[11px] leading-none whitespace-nowrap text-[#1d1d96]">
            <button type="button" className="flex h-[19px] w-[74px] items-center justify-center border border-[#b5ab8c] bg-[#f8f3e0]"><span><u>1</u>-ChemSketch</span></button>
            <button type="button" className="ml-[3px]"><u>2</u>-Database</button>
            <button type="button" className="ml-[5px]"><u>3</u>-I-Lab</button>
            <button type="button" className="mr-1.5 ml-auto text-[10px]">...</button>
        </nav>
    )
}

function Chrome({ children }: { children?: ReactNode }) {
    return (
        <svg width="20" height="19" viewBox="0 0 20 19" aria-hidden="true">
            <circle cx="9" cy="9" r="8" fill="#e33b2e" />
            <path d="M9 9L2.100 5A8 8 0 0 0 8 17z" fill="#2ba24c" />
            <path d="M9 9l-1 8a8 8 0 0 0 8.500-11.500H9z" fill="#fbc116" />
            <circle cx="9" cy="9" r="3.800" fill="#fff" />
            <circle cx="9" cy="9" r="2.900" fill="#3f82ee" />
            {children}
        </svg>
    )
}

const apps: { name: string, icon: ReactNode, state?: string }[] = [
    { name: "Task view", icon: <svg width="13" height="13" viewBox="0 0 13 13" fill="none" stroke="#e4dce0" aria-hidden="true"><path d="M1.500 1v2h7v-2M1.500 12v-2h7v2M1.500 4.500h7v4h-7zM11.500 1v11" /><path d="M11 5h1.500v3h-1.500z" fill="#e4dce0" /></svg> },
    { name: "File explorer", icon: <svg width="17" height="15" viewBox="0 0 17 15" aria-hidden="true"><path d="M0 1h6l2 2h8v11h-16z" fill="#f5b83a" /><path d="M0 5h17v9h-17z" fill="#fbd667" /><path d="M3 14v-5h11v5h-3v-2h-5v2z" fill="#3b93dd" /></svg> },
    { name: "Firefox", icon: <svg width="18" height="18" viewBox="0 0 18 18" aria-hidden="true"><path d="M2 4l1-2 2 2 3-1 2-2q6 3 6.500 9 0 7-7.500 7.500-8-.5-8-8z" fill="#f8702c" /><path d="M10 .5q6 3.500 6.500 9 0 5.500-5 7.500 3-5 .5-8-3-3-2-8.500z" fill="#ffc936" /><circle cx="9" cy="10.500" r="3.600" fill="#7a43c5" /><path d="M3 7q3-2 6 0 0 2-3 2-1 4 4 5-5 2-7-3z" fill="#ff9a2b" /><path d="M2 12q3 5 9 5-7 2-9.500-3z" fill="#e8255b" /></svg> },
    { name: "Edge", icon: <svg width="18" height="18" viewBox="0 0 18 18" aria-hidden="true"><circle cx="9" cy="9" r="8" fill="#1671c8" /><path d="M1 8q1-7 8-7 7 0 8 7 0 4-5 4-3 0-2-2 1-5-4-5-4 0-5 3z" fill="#45c5a0" /><path d="M1 8q2-4 6-3-4 2-3 6 1 4 5 6-8-1-8-9z" fill="#1a9ddd" /><path d="M10 10q-1 4 6 3-2 3-5 3-5-2-4-6 2-3 3 0z" fill="#0c3f85" /></svg> },
    { name: "Chrome", state: "open", icon: <Chrome><path d="M8 14q4-6 8-4l3 2-4 6h-4z" fill="#8aa5ae" /><path d="M9 14q4-3 9-1" stroke="#fff" fill="none" /></Chrome> },
    { name: "Internet Explorer", icon: <svg width="18" height="18" viewBox="0 0 18 18" fill="none" aria-hidden="true"><path d="M14 12q-2 3-5 3-5 0-5-6 1-5 6-5 5 0 5 5.500h-10" stroke="#5cc8f5" strokeWidth="2.600" /><path d="M3 16q-3-1 2-8 6-7 11-6 2 1-1 5" stroke="#f8c638" strokeWidth="1.300" /></svg> },
    { name: "Molecule editor", icon: <svg width="18" height="18" viewBox="0 0 18 18" aria-hidden="true"><path d="M1 1h16v16h-16z" fill="#f6f8fc" stroke="#5584cd" strokeWidth="1.500" /><path d="M4 6v-3l2 2 2-2v3M13 3h-2v3h2M4 9h4M11 9l3 2-2 3M5 12l4-2 2 2M6 12v2" fill="none" stroke="#4462a8" /></svg> },
    { name: "LibreOffice", icon: <svg width="14" height="17" viewBox="0 0 14 17" aria-hidden="true"><path d="M0 0h9l4 4v13h-13z" fill="#f5f5f5" /><path d="M9 0h4v4z" fill="#777" /></svg> },
    { name: "Chrome profile", state: "open", icon: <Chrome><circle cx="13" cy="12" r="5" fill="#e9a33b" /><path d="M10 12l2-3 1 3 3-2-1 4 2 1-4 1-3 1z" fill="#7a3a1e" /></Chrome> },
    { name: "3D viewer", state: "open", icon: <svg width="16" height="12" viewBox="0 0 16 12" aria-hidden="true"><path d="M3 1l8-1 4 4-1 7-9 1-5-4z" fill="#c9d2dc" /><path d="M3 1l3 3 5-4M6 4v8M6 4l8 1" stroke="#75808c" fill="none" /><path d="M2 8l3-4v5M9 5h2v4l2-3" stroke="#334a7d" fill="none" /></svg> },
    { name: "ChemSketch", state: "active", icon: <svg width="19" height="18" viewBox="0 0 19 18" aria-hidden="true"><path d="M4 1h13v13h-13z" fill="#d9e5e8" stroke="#fff" /><path d="M6 4q3-3 5 0t4 1M6 9l4-3 5 3-3 3M9 11l4-5" stroke="#6d8ea8" fill="none" /><path d="M1 4h2v10h-2z" fill="#e1451f" /><path d="M1 14h17v3h-17z" fill="#f2c12e" /><path d="M4 14h13v1h-13z" fill="#c7532e" /></svg> },
]

function Taskbar() {
    return (
        <footer className="flex h-[30px] shrink-0 items-stretch bg-[#3b1627] font-['Open_Sans',sans-serif] text-white">
            <button type="button" aria-label="Start" className="flex w-[35px] shrink-0 items-center justify-center">
                <svg width="13" height="13" viewBox="0 0 13 13" aria-hidden="true"><path d="M0 2l5.500-.8v5h-5.500zM6.500 1l6.500-1v6.200h-6.500zM0 7.200h5.500v5l-5.500-.8zM6.500 7.200h6.500v5.800l-6.500-1z" fill="#fff" /></svg>
            </button>
            <label className="flex w-[252px] shrink-0 items-center bg-[#f3f2f1]">
                <svg width="13" height="13" viewBox="0 0 13 13" className="ml-[9px] shrink-0" fill="none" stroke="#222" aria-hidden="true"><circle cx="8" cy="5" r="4" /><path d="M5 8l-4 4" /></svg>
                <input type="text" aria-label="Search" placeholder="Taper ici pour rechercher" className="ml-[7px] w-0 flex-1 bg-transparent text-[10px] outline-none placeholder:text-[#333]" />
                <svg width="58" height="30" viewBox="0 0 58 30" className="shrink-0" aria-hidden="true">
                    <path d="M3 12q1-3 4-3 3-1 4 2 2 0 2 2h-10z" fill="#edb9c0" />
                    <path d="M17 8q0-3 3-3 3-3 5 0 4-1 5 2v2h-13z" fill="#e7a8b2" />
                    <path d="M0 30q5-8 12-9 7 1 14 9z" fill="#2aa5da" />
                    <path d="M9 22l10-6 12-4h10l17 6v12h-36q-4-6-13-8z" fill="#4d9844" />
                    <path d="M20 19l8-2v8h-8zM41 20l6-2v8h-6z" fill="#f0c35d" />
                    <path d="M26 17l9-2v13h-9z" fill="#d8688d" />
                    <path d="M33 20l7-2v10h-7z" fill="#eba276" />
                    <path d="M28 18h2v2h-2zM32 18h2v2h-2zM28 22h2v2h-2zM35 22h2v2h-2z" fill="#7a3458" />
                    <path d="M44 10l4-3 4 3v9h-8z" fill="#c98e4e" />
                    <path d="M46 8q2-7 4 0z" fill="#425d86" />
                    <path d="M48 2v4" stroke="#425d86" />
                    <path d="M45 13h2v3h-2zM49 13h2v3h-2z" fill="#6d4725" />
                    <path d="M53 22l5-6v14h-14q-2-4 2-5 2-4 7-3z" fill="#a52a7e" />
                    <circle cx="48" cy="26" r="3" fill="#d955a2" />
                    <circle cx="55" cy="23" r="3" fill="#c73f94" />
                </svg>
            </label>
            <div className="flex shrink-0">
                {apps.map(a => (
                    <button key={a.name} type="button" aria-label={a.name} className={`flex w-9 shrink-0 items-center justify-center border-b-2 ${a.state === "active" ? "border-[#f3a3ae] bg-[#9b1222]" : a.state === "open" ? "border-[#e6a1ab]" : "border-transparent"}`}>{a.icon}</button>
                ))}
            </div>
            <div className="ml-auto flex shrink-0 items-center">
                <button type="button" aria-label="Hidden icons" className="flex w-6 justify-center"><svg width="10" height="6" viewBox="0 0 10 6" aria-hidden="true"><path d="M1 5l4-4 4 4" fill="none" stroke="#fff" strokeWidth="1.200" /></svg></button>
                <button type="button" aria-label="Battery" className="flex w-6 justify-center"><svg width="13" height="9" viewBox="0 0 13 9" fill="none" stroke="#fff" aria-hidden="true"><path d="M4 2.500h7v5h-6M11.500 4v2M1 1h4v3h-4zM3 4v4M1.500 0v1M4 0v1" /><path d="M6 4h4v2.500h-4z" fill="#fff" stroke="none" /></svg></button>
                <button type="button" aria-label="Wi-Fi" className="flex w-[26px] justify-center"><svg width="11" height="11" viewBox="0 0 11 11" fill="none" stroke="#cbbcc3" aria-hidden="true"><path d="M1 9q1-7 9-8M3.500 10q0-5 6.500-6M6 10q1-3 4-3" /><circle cx="9" cy="9" r="1" fill="#fff" /></svg></button>
                <button type="button" aria-label="Pen" className="flex w-[25px] justify-center"><svg width="13" height="13" viewBox="0 0 13 13" fill="none" stroke="#fff" aria-hidden="true"><path d="M4 9q-3-2-3 1 0 2 4 1 4-2 7-5M5 9l5-8 2 1-5 8zM10 6q3-1 2 1" /></svg></button>
                <div className="flex w-14 flex-col items-center text-[8px] leading-[13px]"><span>18:35</span><span>01/02/2023</span></div>
                <button type="button" aria-label="Notifications" className="relative flex h-full w-[34px] items-center border-r border-[#75606a] pl-1.5">
                    <svg width="13" height="13" viewBox="0 0 13 13" aria-hidden="true"><path d="M0 0h12v9h-6l-3 3v-3h-3z" fill="#fff" /><path d="M2 3h8M2 5.500h6" stroke="#3b1627" /></svg>
                    <span className="absolute right-2 bottom-1 flex size-[13px] items-center justify-center rounded-full bg-[#b92735] text-[8px] font-semibold">12</span>
                </button>
                <div className="w-0.5" />
            </div>
        </footer>
    )
}

const menus: [string, string, string][] = [
    ["", "F", "ile"], ["", "E", "dit"], ["", "P", "ages"], ["", "T", "ools"], ["Te", "m", "plates"], ["", "O", "ptions"],
    ["", "D", "ocuments"], ["Add", "-", "Ons"], ["", "A", "CD/Labs"], ["", "H", "elp"],
]

export default function App() {
    return (
        <div className="flex min-h-screen flex-col overflow-hidden">
            <header className="flex h-4 shrink-0 items-center bg-[#e81123] pl-0.5 font-['Lato',sans-serif] text-white">
                <svg width="12" height="12" viewBox="0 0 12 12" aria-hidden="true"><path d="M2 1h9v8h-9z" fill="#cfdde5" /><path d="M4 3q2-2 3 1t3 0M4 7l5-2" stroke="#537b9c" fill="none" /><path d="M0 9h11v2h-11z" fill="#f1d23b" /><path d="M0 3h2v6h-2z" fill="#e9edf2" /></svg>
                <h1 className="ml-[3px] text-[9px] leading-none whitespace-nowrap">ACD/ChemSketch (Freeware) - [noname01.sk2]</h1>
                <div className="ml-auto flex">
                    <button type="button" aria-label="Minimize" className="flex w-[33px] items-center justify-center"><svg width="8" height="8" viewBox="0 0 8 8"><path d="M0 4.500h8" stroke="#fff" /></svg></button>
                    <button type="button" aria-label="Restore" className="flex w-[33px] items-center justify-center"><svg width="8" height="8" viewBox="0 0 8 8" fill="none" stroke="#fff"><path d="M.5 2.500h5v5h-5zM2.500 2.500v-2h5v5h-2" /></svg></button>
                    <button type="button" aria-label="Close" className="flex w-[35px] items-center justify-center"><svg width="8" height="8" viewBox="0 0 8 8"><path d="M.5 .5l7 7M7.500 .5l-7 7" stroke="#fff" /></svg></button>
                </div>
            </header>
            <nav className="flex h-[15px] shrink-0 items-center gap-[9px] bg-linear-to-b from-[#d3e9fb] to-[#e2f2fe] pl-[5px] font-['Roboto',sans-serif] text-[9px] leading-none font-medium text-[#1f1f6e]">
                {menus.map(([before, key, after]) => <button key={after} type="button">{before}<u>{key}</u>{after}</button>)}
            </nav>
            <TopToolbar />
            <DrawToolbar />
            <Workspace />
            <Palette />
            <RssBar />
            <StatusBar />
            <ModuleTabs />
            <Taskbar />
        </div>
    )
}
